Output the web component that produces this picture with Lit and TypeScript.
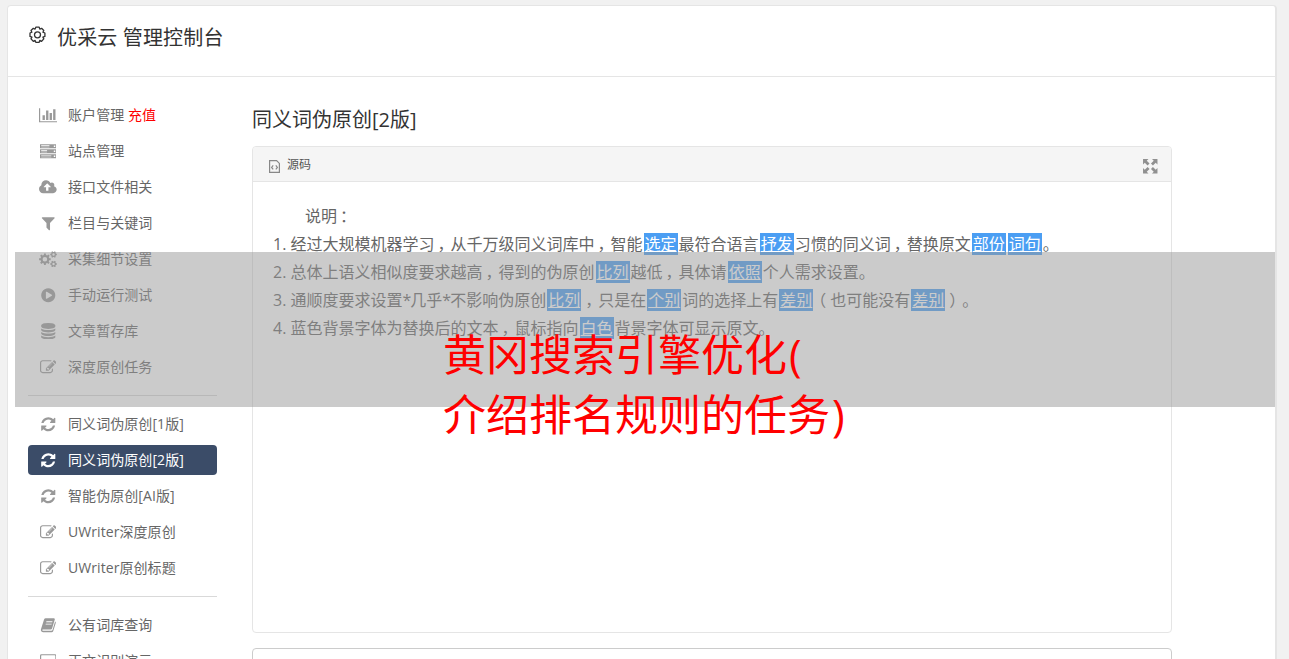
import { LitElement, html, css, svg } from 'lit';
import { customElement, property } from 'lit/decorators.js';

interface MenuItem {
  icon: string;
  label: string;
  badge?: string;
  active?: boolean;
}

// Toothed wheel outline with a round hole, used for the "cogs" icon
function gear(cx: number, cy: number, r: number, teeth: number, hole: number) {
  const step = (Math.PI * 2) / teeth;
  const points: string[] = [];
  for (let i = 0; i < teeth; i++) {
    const a = i * step;
    [[-0.3, 0.76], [-0.2, 1], [0.2, 1], [0.3, 0.76]].forEach(([o, k]) => {
      points.push(
        `${(cx + Math.cos(a + o * step) * r * k).toFixed(1)} ${(cy + Math.sin(a + o * step) * r * k).toFixed(1)}`
      );
    });
  }
  return `M${points.join('L')}ZM${cx - hole} ${cy}a${hole} ${hole} 0 1 0 ${hole * 2} 0a${hole} ${hole} 0 1 0 ${-hole * 2} 0Z`;
}

const icons: Record<string, { box: string; d: string }> = {
  chart: {
    box: '0 0 2048 1792',
    d: 'M640 896v512H384V896zM1024 384v1024H768V384zM2048 1536v128H0V128h128v1408zM1408 640v768h-256V640zM1792 256v1152h-256V256z',
  },
  server: {
    box: '0 0 1792 1792',
    d: 'M0 128h1792v448H0zM128 256v64h896v-64zM128 400v60h896v-60zM1500 270v160h160V270zM0 672h1792v448H0zM128 800v64h640v-64zM128 944v60h640v-60zM1500 814v160h160V814zM0 1216h1792v448H0zM128 1344v64h1100v-64zM128 1488v60h1100v-60zM1500 1358v160h160v-160z',
  },
  cloud: {
    box: '0 0 1920 1792',
    d: 'M1280 864q0-14-9-23l-352-352q-9-9-23-9t-23 9l-351 351q-10 12-10 24 0 14 9 23t23 9h224v352q0 13 9.5 22.5t22.5 9.5h192q13 0 22.5-9.5t9.5-22.5v-352h224q13 0 22.5-9.5t9.5-22.5zm640 288q0 159-112.5 271.5t-271.5 112.5h-1088q-185 0-316.5-131.5t-131.5-316.5q0-130 70-240t188-165q-2-30-2-43 0-212 150-362t362-150q156 0 285.5 87t188.5 231q71-62 166-62 106 0 181 75t75 181q0 76-41 138 130 31 213.5 135.5t83.5 238.5z',
  },
  filter: {
    box: '0 0 1792 1792',
    d: 'M1595 295q17 41-14 70l-493 493v742q0 42-39 59-13 5-25 5-27 0-45-19l-256-256q-19-19-19-45v-486l-493-493q-31-29-14-70 17-39 59-39h1280q42 0 59 39z',
  },
  cogs: {
    box: '0 0 1920 1792',
    d: gear(640, 896, 640, 8, 250) + gear(1580, 384, 370, 6, 130) + gear(1580, 1408, 370, 6, 130),
  },
  play: {
    box: '0 0 1792 1792',
    d: 'M896 128q209 0 385.5 103t279.5 279.5 103 385.5-103 385.5-279.5 279.5-385.5 103-385.5-103-279.5-279.5-103-385.5 103-385.5 279.5-279.5 385.5-103zm384 823q32-18 32-55t-32-55l-544-320q-31-19-64-1-32 19-32 56v640q0 37 32 56 16 8 32 8 17 0 32-9z',
  },
  database: {
    box: '0 0 1792 1792',
    d: 'M896 768q237 0 443-43t325-127v170q0 69-103 128t-280 93.5-385 34.5-385-34.5-280-93.5-103-128v-170q119 84 325 127t443 43zm0 768q237 0 443-43t325-127v170q0 69-103 128t-280 93.5-385 34.5-385-34.5-280-93.5-103-128v-170q119 84 325 127t443 43zm0-384q237 0 443-43t325-127v170q0 69-103 128t-280 93.5-385 34.5-385-34.5-280-93.5-103-128v-170q119 84 325 127t443 43zm0-1152q208 0 385 34.5t280 93.5 103 128v128q0 69-103 128t-280 93.5-385 34.5-385-34.5-280-93.5-103-128v-128q0-69 103-128t280-93.5 385-34.5z',
  },
  edit: {
    box: '0 0 1792 1792',
    d: 'M888 1184l116-116-152-152-116 116v56h96v96h56zm440-720q-16-16-33 1l-350 350q-17 17-1 33t33-1l350-350q17-17 1-33zm80 594v190q0 119-84.5 203.5t-203.5 84.5h-832q-119 0-203.5-84.5t-84.5-203.5v-832q0-119 84.5-203.5t203.5-84.5h832q63 0 117 25 15 7 18 23 3 17-9 29l-49 49q-14 14-32 8-23-6-45-6h-832q-66 0-113 47t-47 113v832q0 66 47 113t113 47h832q66 0 113-47t47-113v-126q0-13 9-22l64-64q15-15 35-7t20 29zm-96-738l288 288-672 672h-288v-288zm444 132l-92 92-288-288 92-92q28-28 68-28t68 28l152 152q28 28 28 68t-28 68z',
  },
  refresh: {
    box: '0 0 1792 1792',
    d: 'M1639 1056q0 5-1 7-64 268-268 434.5t-478 166.5q-146 0-282.5-55t-243.5-157l-129 129q-19 19-45 19t-45-19-19-45v-448q0-26 19-45t45-19h448q26 0 45 19t19 45-19 45l-137 137q71 66 161 102t187 36q134 0 250-65t186-179q11-17 53-117 8-23 30-23h192q13 0 22.5 9.5t9.5 22.5zm25-800v448q0 26-19 45t-45 19h-448q-26 0-45-19t-19-45 19-45l138-138q-148-137-349-137-134 0-250 65t-186 179q-11 17-53 117-8 23-30 23h-199q-13 0-22.5-9.5t-9.5-22.5v-7q65-268 270-434.5t480-166.5q146 0 284 55.5t245 156.5l130-129q19-19 45-19t45 19 19 45z',
  },
  book: {
    box: '0 0 1792 1792',
    d: 'M620 130H1500Q1640 150 1600 300L1310 1240Q1270 1350 1150 1350H330Q220 1350 230 1420Q240 1500 350 1500H1230Q1330 1500 1360 1410L1640 500Q1740 540 1710 650L1430 1540Q1390 1660 1260 1660H330Q150 1660 100 1470Q80 1380 120 1280L440 270Q490 130 620 130ZM700 470L670 570H1330L1360 470ZM630 720L600 820H1250L1280 720Z',
  },
  laptop: {
    box: '0 0 1792 1792',
    d: 'M160 128H1632Q1792 128 1792 288V1250Q1792 1408 1632 1408H160Q0 1408 0 1250V288Q0 128 160 128ZM192 256Q128 256 128 320V1200Q128 1280 192 1280H1600Q1664 1280 1664 1200V320Q1664 256 1600 256ZM500 1536H1292V1664H500Z',
  },
  expand: {
    box: '0 0 16 16',
    d: 'M1 1h5.3L4.6 2.7 7.3 5.4 5.4 7.3 2.7 4.6 1 6.3zM15 1v5.3L13.3 4.6 10.6 7.3 8.7 5.4 11.4 2.7 9.7 1zM1 15V9.7l1.7 1.7 2.7-2.7 1.9 1.9-2.7 2.7L6.3 15zM15 15H9.7l1.7-1.7-2.7-2.7 1.9-1.9 2.7 2.7L15 9.7z',
  },
};

const menu: MenuItem[][] = [
  [
    { icon: 'chart', label: '账户管理', badge: '充值' },
    { icon: 'server', label: '站点管理' },
    { icon: 'cloud', label: '接口文件相关' },
    { icon: 'filter', label: '栏目与关键词' },
    { icon: 'cogs', label: '采集细节设置' },
    { icon: 'play', label: '手动运行测试' },
    { icon: 'database', label: '文章暂存库' },
    { icon: 'edit', label: '深度原创任务' },
  ],
  [
    { icon: 'refresh', label: '同义词伪原创[1版]' },
    { icon: 'refresh', label: '同义词伪原创[2版]', active: true },
    { icon: 'refresh', label: '智能伪原创[AI版]' },
    { icon: 'edit', label: 'UWriter深度原创' },
    { icon: 'edit', label: 'UWriter原创标题' },
  ],
  [
    { icon: 'book', label: '公有词库查询' },
    { icon: 'laptop', label: '正文识别演示' },
  ],
];

// Words between braces are the replaced ones
const notes = [
  '经过大规模机器学习，从千万级同义词库中，智能{选定}最符合语言{抒发}习惯的同义词，替换原文{部份}{词句}。',
  '总体上语义相似度要求越高，得到的伪原创{比列}越低，具体请{依照}个人需求设置。',
  '通顺度要求设置*几乎*不影响伪原创{比列}，只是在{个别}词的选择上有{差别}（也可能没有{差别}）。',
  '蓝色背景字体为替换后的文本，鼠标指向{白色}背景字体可显示原文。',
];

@customElement('app-icon')
export class AppIcon extends LitElement {
  static styles = css`
    :host {
      display: flex;
      justify-content: center;
      flex: none;
    }

    svg {
      display: block;
      height: 16.5px;
      fill: currentColor;
      fill-rule: evenodd;
    }
  `;

  @property() name = '';

  render() {
    const icon = icons[this.name];
    return html`<svg viewBox=${icon.box}>${svg`<path d=${icon.d} />`}</svg>`;
  }
}

@customElement('side-menu')
export class SideMenu extends LitElement {
  static styles = css`
    :host {
      display: block;
      width: 189px;
      flex: none;
    }

    .group + .group {
      border-top: 1px solid #d9d9d9;
      margin-top: 13px;
      padding-top: 13px;
    }

    .item {
      display: flex;
      align-items: center;
      height: 30px;
      border-radius: 4px;
      font-size: 14px;
      line-height: 30px;
      letter-spacing: 0.07px;
      color: #666;
      white-space: nowrap;
    }

    .item + .item {
      margin-top: 6px;
    }

    .item app-icon {
      width: 20px;
      margin: 0 10px;
      color: #999;
    }

    .item.active,
    .item.active app-icon {
      background: #3b4c68;
      color: #fff;
    }

    .badge {
      color: #f00;
    }
  `;

  render() {
    return menu.map(
      (group) => html`
        <div class="group">
          ${group.map(
            (item) => html`
              <div class="item ${item.active ? 'active' : ''}">
                <app-icon name=${item.icon}></app-icon>
                <span>${item.label} ${item.badge ? html`<span class="badge">${item.badge}</span>` : null}</span>
              </div>
            `
          )}
        </div>
      `
    );
  }
}

@customElement('app-root')
export class AppRoot extends LitElement {
  static styles = css`
    :host {
      display: block;
      position: relative;
      box-sizing: border-box;
      height: 659px;
      padding: 5px 12px 0 7px;
      overflow: hidden;
      background: #f1f1f1;
      color: #666;
      font-family: 'Open Sans', 'Noto Sans CJK SC', sans-serif;
    }

    .page {
      box-sizing: border-box;
      height: 700px;
      border: 1px solid #e5e5e5;
      border-right-width: 2px;
      border-radius: 4px;
      background: #fff;
    }

    .top {
      display: flex;
      align-items: flex-start;
      gap: 10px;
      height: 70px;
      padding-left: 20px;
      border-bottom: 1px solid #e5e5e5;
      color: #333;
    }

    .top svg {
      display: block;
      width: 19px;
      height: 19px;
      margin-top: 20px;
    }

    .title {
      margin-top: 17px;
      font-size: 20px;
      line-height: 30px;
      letter-spacing: 0.15px;
    }

    .body {
      display: flex;
      gap: 35px;
      padding: 23px 0 0 20px;
    }

    .content {
      width: 920px;
    }

    h2 {
      margin: 5px 0 11px;
      font-size: 20px;
      font-weight: 400;
      line-height: 30px;
      color: #333;
    }

    .panel {
      box-sizing: border-box;
      height: 487px;
      border: 1px solid #e5e5e5;
      border-radius: 4px;
    }

    .bar {
      display: flex;
      align-items: center;
      height: 34px;
      padding: 0 13px 0 15px;
      border-bottom: 1px solid #e5e5e5;
      border-radius: 3px 3px 0 0;
      background: #f5f5f5;
      font-size: 12px;
      color: #555;
    }

    .bar svg {
      width: 13px;
      height: 15px;
      margin: 4px 6px 0 0;
    }

    .bar app-icon {
      margin: 4px 0 0 auto;
      color: #909090;
    }

    .text {
      padding: 20px 20px 0;
      font-size: 16px;
      line-height: 28px;
      white-space: nowrap;
      text-spacing-trim: space-all;
    }

    .lead {
      padding-left: 32px;
    }

    /* centre the glyph of full-width punctuation in its cell */
    .mid {
      margin: 0 -3px 0 3px;
    }

    .open {
      margin: 0 4px 0 -4px;
    }

    .star {
      margin-right: -1px;
    }

    mark {
      margin: 0 1px;
      padding: 0 1px;
      background: #4b9ef3;
      color: #fff;
      text-decoration: underline;
    }

    .next {
      height: 40px;
      margin-top: 15px;
      border: 1px solid #ccc;
      border-radius: 4px;
    }

    .shade {
      position: absolute;
      left: 15px;
      top: 252px;
      width: 1260px;
      height: 155px;
      background: rgba(151, 151, 151, 0.5);
    }

    .caption {
      position: absolute;
      left: 443px;
      top: 325px;
      font-size: 43px;
      line-height: 60px;
      color: #f00;
      white-space: nowrap;
    }

    .paren {
      margin-left: 2px;
    }
  `;

  render() {
    return html`
      <div class="page">
        <div class="top">
          <svg viewBox="0 0 19 19" fill="none" stroke="#333" stroke-width="1.3" stroke-linejoin="round">
            <path
              d="M7.8 1.2h3.4l.6 1.9 1.8-.8 2.2 2.2-.9 1.7 2 .8v3.4l-2 .7.9 1.8-2.2 2.4-1.8-.9-.6 1.9H7.8l-.7-1.9-1.8.9-2.3-2.4.9-1.8-1.9-.7V7l1.9-.8L3 4.5l2.3-2.2 1.8.8z"
            />
            <circle cx="9.5" cy="8.8" r="3" />
          </svg>
          <div class="title">优采云 管理控制台</div>
        </div>
        <div class="body">
          <side-menu></side-menu>
          <div class="content">
            <h2>同义词伪原创[2版]</h2>
            <div class="panel">
              <div class="bar">
                <svg viewBox="0 0 13 15" fill="none" stroke="#888" stroke-width="1.2">
                  <path d="M1.6 1.6h7L11.4 4.4v9H1.6zM5.2 6.4L3.6 8.4l1.6 2M7.8 6.4l1.6 2-1.6 2" />
                </svg>
                <span>源码</span>
                <app-icon name="expand"></app-icon>
              </div>
              <div class="text">
                <div class="lead">说明<span class="mid">：</span></div>
                ${notes.map((note, i) => html`<div>${i + 1}. ${this._renderNote(note)}</div>`)}
              </div>
            </div>
            <div class="next"></div>
          </div>
        </div>
      </div>
      <div class="shade"></div>
      <div class="caption">
        黄冈搜索引擎优化<span class="paren">(</span><br />介绍排名规则的任务<span class="paren">)</span>
      </div>
    `;
  }

  private _renderNote(note: string) {
    return note
      .split(/[{}]/)
      .map((part, i) => (i % 2 ? html`<mark>${part}</mark>` : this._renderPlain(part)));
  }

  private _renderPlain(text: string) {
    return text.split(/([，（）*])/).map((s) => {
      if (s === '，' || s === '）') return html`<span class="mid">${s}</span>`;
      if (s === '（') return html`<span class="open">${s}</span>`;
      if (s === '*') return html`<span class="star">${s}</span>`;
      return s;
    });
  }
}
